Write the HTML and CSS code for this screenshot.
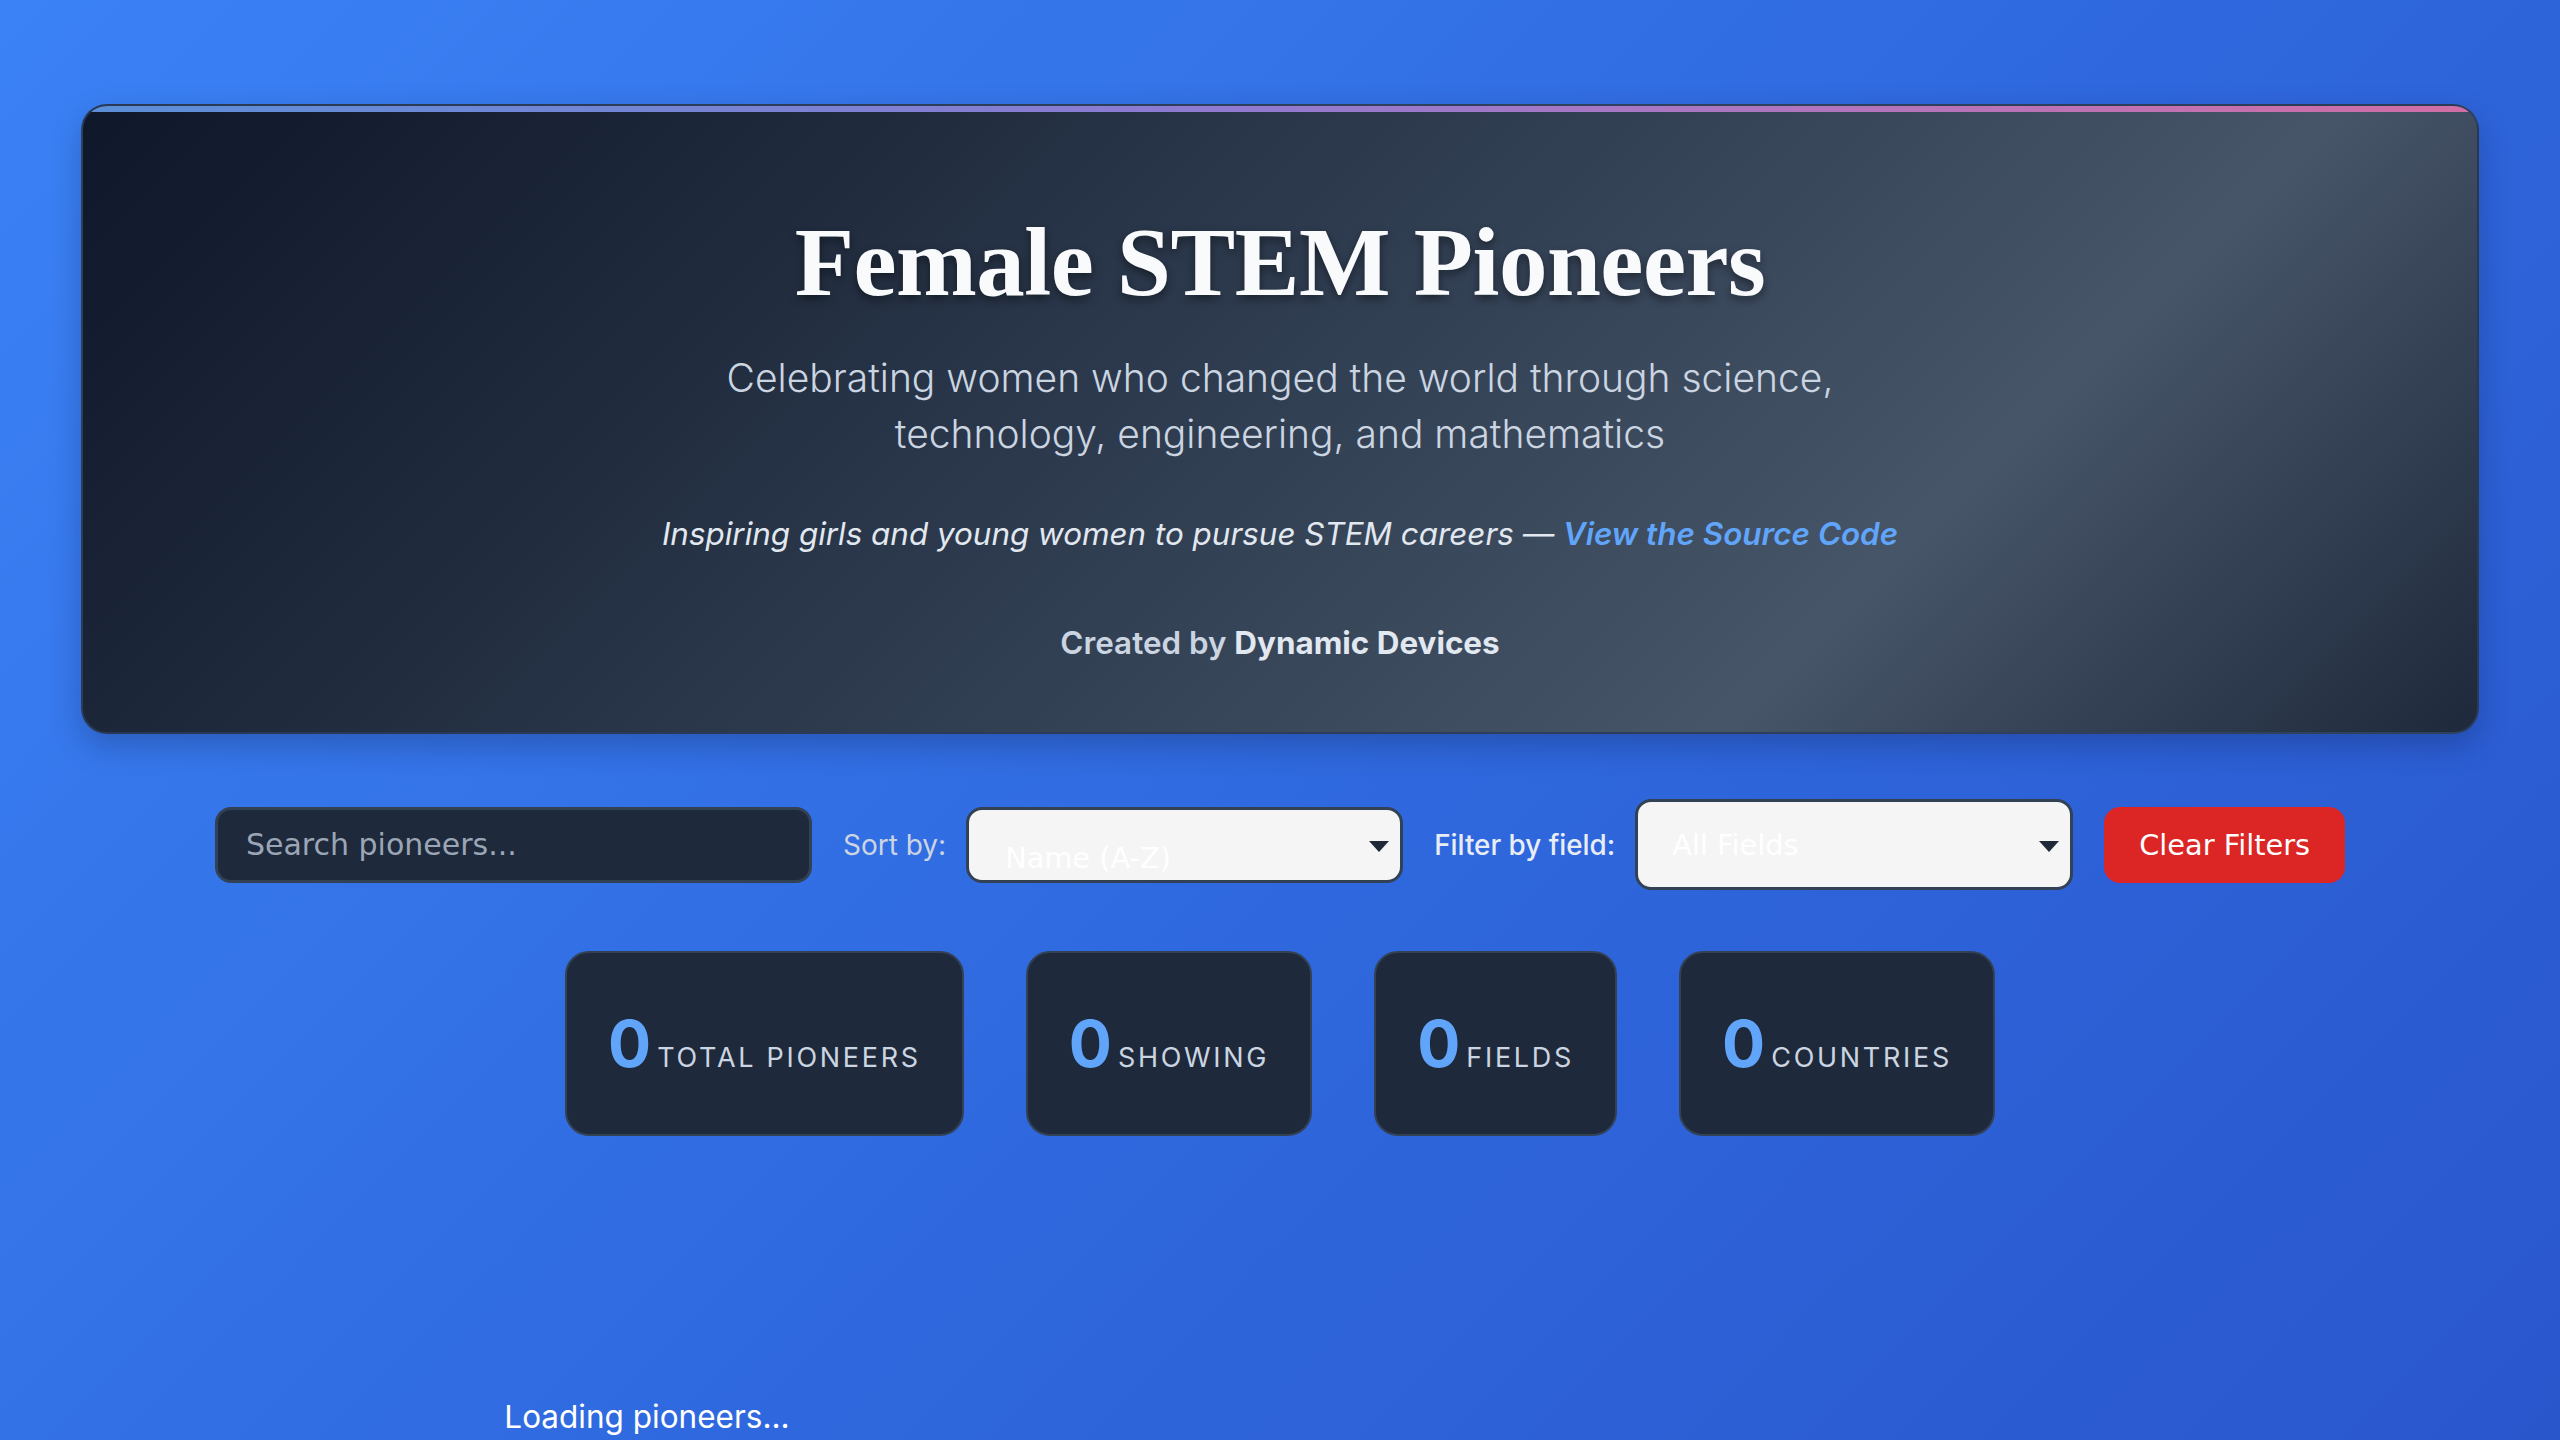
FILE: index.html
```html
<!DOCTYPE html>
<html lang="en">
<head>
<meta charset="utf-8">
<title>Female STEM Pioneers</title>
<link rel="stylesheet" href="styles.css">
</head>
<body>
<div class="page">
  <header class="hero">
    <h1 class="hero-title">Female STEM Pioneers</h1>
    <p class="hero-subtitle">Celebrating women who changed the world through science, technology, engineering, and mathematics</p>
    <p class="hero-tagline">Inspiring girls and young women to pursue STEM careers — <a class="source-link" href="#">View the Source Code</a></p>
    <p class="hero-credit">Created by <strong>Dynamic Devices</strong></p>
  </header>

  <section class="controls">
    <input class="search" type="text" placeholder="Search pioneers...">
    <div class="control-group">
      <label class="control-label">Sort by:</label>
      <div class="select-wrap">
        <select class="select select-sort">
          <option>Name (A-Z)</option>
        </select>
      </div>
    </div>
    <div class="control-group">
      <label class="control-label control-label-strong">Filter by field:</label>
      <div class="select-wrap">
        <select class="select select-filter">
          <option>All Fields</option>
        </select>
      </div>
    </div>
    <button class="clear-btn" type="button">Clear Filters</button>
  </section>

  <section class="stats">
    <div class="stat-card"><span class="stat-inner"><span class="stat-num">0</span><span class="stat-label">Total Pioneers</span></span></div>
    <div class="stat-card"><span class="stat-inner"><span class="stat-num">0</span><span class="stat-label">Showing</span></span></div>
    <div class="stat-card"><span class="stat-inner"><span class="stat-num">0</span><span class="stat-label">Fields</span></span></div>
    <div class="stat-card"><span class="stat-inner"><span class="stat-num">0</span><span class="stat-label">Countries</span></span></div>
  </section>

  <section class="pioneers">
    <div class="loading">Loading pioneers...</div>
  </section>
</div>
</body>
</html>
```

FILE: styles.css
```css
* {
  box-sizing: border-box;
}

html, body {
  margin: 0;
  padding: 0;
}

body {
  min-height: 100vh;
  background: linear-gradient(135deg, #3b82f6 0%, #2f68de 55%, #2a56cc 100%);
  font-family: Inter, "Liberation Sans", sans-serif;
  color: #ffffff;
}

.page {
  padding: 104px 81px 0;
}

/* Hero */
.hero {
  position: relative;
  overflow: hidden;
  border: 2px solid rgba(45, 62, 92, 0.85);
  border-radius: 26px;
  background: linear-gradient(135deg, #0f172a 0%, #1e293b 25%, #334155 52%, #475569 75%, #1e293b 100%);
  box-shadow: 0 12px 30px rgba(10, 20, 50, 0.25);
  padding: 99px 40px 66px;
  text-align: center;
}

.hero::before {
  content: "";
  position: absolute;
  top: 0;
  left: 0;
  right: 0;
  height: 6px;
  background: linear-gradient(90deg, #5b8fd8 0%, #8c7bd2 45%, #a877c4 65%, #d06ea6 100%);
}

.hero-title {
  margin: 0;
  font-family: "Liberation Serif", "DejaVu Serif", serif;
  font-weight: 700;
  font-size: 97px;
  line-height: 115px;
  letter-spacing: -0.5px;
  color: #f8fafc;
  text-shadow: 0 4px 8px rgba(0, 0, 0, 0.45);
}

.hero-subtitle {
  margin: 30px auto 0;
  max-width: 1200px;
  font-weight: 300;
  font-size: 39px;
  line-height: 56px;
  color: #cbd5e1;
}

.hero-tagline {
  margin: 49px 0 0;
  font-style: italic;
  font-size: 31.4px;
  line-height: 46px;
  color: #e2e8f0;
}

.source-link {
  color: #60a5fa;
  font-weight: 600;
  text-decoration: none;
}

.hero-credit {
  margin: 63px 0 0;
  font-weight: 600;
  font-size: 31.4px;
  line-height: 46px;
  color: #cbd5e1;
}

.hero-credit strong {
  font-weight: 700;
  color: #e2e8f0;
}

/* Controls */
.controls {
  display: flex;
  justify-content: center;
  align-items: center;
  gap: 31px;
  margin-top: 65px;
}

.search {
  width: 597px;
  height: 76px;
  padding: 0 28px;
  border: 3px solid #334155;
  border-radius: 16px;
  background: #1e293b;
  color: #ffffff;
  font-family: "DejaVu Sans", sans-serif;
  font-size: 30px;
  outline: none;
}

.search::placeholder {
  color: #9aa6b6;
}

.control-group {
  display: flex;
  align-items: center;
  gap: 20px;
}

.control-label {
  font-family: Inter, sans-serif;
  font-size: 28px;
  color: #cbd5e1;
}

.control-label-strong {
  font-weight: 500;
  font-size: 27.8px;
  color: #e8edf5;
}

.select-wrap {
  position: relative;
}

.select-wrap::after {
  content: "";
  position: absolute;
  right: 14px;
  top: 50%;
  margin-top: -4px;
  border-left: 10px solid transparent;
  border-right: 10px solid transparent;
  border-top: 11px solid #1f2937;
  pointer-events: none;
}

.select {
  display: block;
  appearance: none;
  -webkit-appearance: none;
  width: 437px;
  border: 3px solid #334155;
  border-radius: 16px;
  background: #f5f5f5;
  color: #ffffff;
  font-family: "DejaVu Sans", sans-serif;
  font-size: 28.8px;
  outline: none;
}

.select-sort {
  height: 76px;
  padding: 26px 40px 0 36px;
}

.select-filter {
  width: 438px;
  height: 91px;
  padding: 0 40px 0 34px;
}

.clear-btn {
  height: 76px;
  padding: 0 35px;
  border: none;
  border-radius: 16px;
  background: #dc2626;
  color: #ffffff;
  font-family: "DejaVu Sans", sans-serif;
  font-size: 28.8px;
}

/* Stats */
.stats {
  display: flex;
  justify-content: center;
  gap: 62px;
  margin-top: 61px;
}

.stat-card {
  display: flex;
  align-items: center;
  height: 185px;
  padding: 0 41px;
  border: 2px solid #334155;
  border-radius: 24px;
  background: #1e293b;
}

.stat-inner {
  line-height: 1;
}

.stat-num {
  font-size: 64px;
  font-weight: 700;
  color: #60a5fa;
}

.stat-label {
  margin-left: 6px;
  font-size: 27px;
  letter-spacing: 2.7px;
  text-transform: uppercase;
  color: #cbd5e1;
}

/* Pioneers */
.pioneers {
  margin-top: 257px;
}

.loading {
  width: 1132px;
  text-align: center;
  font-size: 31.5px;
  line-height: 48px;
  color: #ffffff;
}
```
